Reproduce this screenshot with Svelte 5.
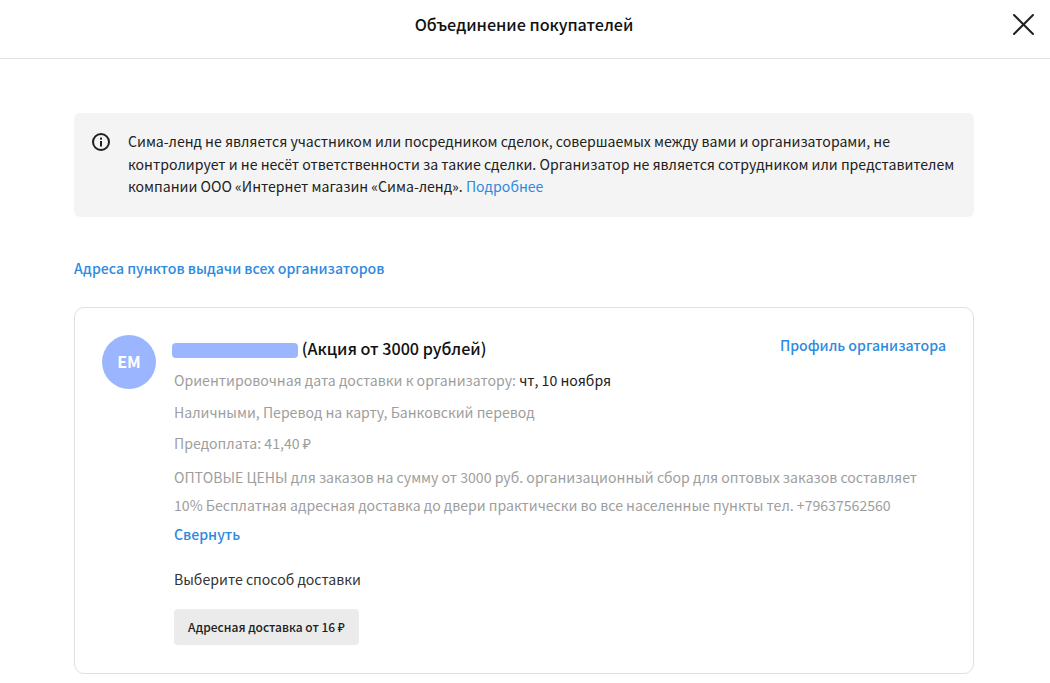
<script>
	const details = [
		'Наличными, Перевод на карту, Банковский перевод',
		'Предоплата: 41,40 ₽'
	];
</script>

<div class="page">
	<header class="header">
		<h1>Объединение покупателей</h1>
		<button class="close" aria-label="Закрыть">
			<svg width="24" height="24" viewBox="0 0 24 24" fill="none" stroke="#212121" stroke-width="2" stroke-linecap="round">
				<path d="M3 3l19 19M22 3L3 22" />
			</svg>
		</button>
	</header>

	<main class="content">
		<div class="notice">
			<svg class="info" width="20" height="20" viewBox="0 0 20 20" fill="none">
				<circle cx="10" cy="10" r="8" stroke="#212121" stroke-width="2" />
				<rect x="9" y="9" width="2" height="5.5" fill="#212121" />
				<rect x="9" y="5.6" width="2" height="2" fill="#212121" />
			</svg>
			<p>
				Сима-ленд не является участником или посредником сделок, совершаемых между вами и организаторами, не контролирует и не несёт ответственности за такие сделки. Организатор не является сотрудником или представителем компании ООО «Интернет магазин «Сима-ленд». <a href="#more">Подробнее</a>
			</p>
		</div>

		<a class="link all" href="#all">Адреса пунктов выдачи всех организаторов</a>

		<section class="card">
			<div class="avatar">ЕМ</div>
			<div class="body">
				<div class="top">
					<div class="title"><span class="blur"></span> (Акция от 3000 рублей)</div>
					<a class="link" href="#profile">Профиль организатора</a>
				</div>
				<div class="row first">Ориентировочная дата доставки к организатору: <span class="dark">чт, 10 ноября</span></div>
				{#each details as d}
					<div class="row">{d}</div>
				{/each}
				<div class="desc">ОПТОВЫЕ ЦЕНЫ для заказов на сумму от 3000 руб. организационный сбор для оптовых заказов составляет 10% Бесплатная адресная доставка до двери практически во все населенные пункты тел. +79637562560</div>
				<a class="link fold" href="#fold">Свернуть</a>
				<div class="choose">Выберите способ доставки</div>
				<button class="method">Адресная доставка от 16 ₽</button>
			</div>
		</section>
	</main>
</div>

<style>
	:global(body) {
		background: #fff;
		font-family: "Noto Sans CJK SC", "Noto Sans", sans-serif;
		color: #212121;
	}

	.page {
		height: 683px;
		overflow: hidden;
	}

	.header {
		position: relative;
		height: 58px;
		display: flex;
		align-items: center;
		justify-content: center;
		border-bottom: 1px solid #e0e0e0;
	}

	h1 {
		margin: 0 2px 10px 0;
		font-size: 16.15px;
		line-height: 24px;
		font-weight: 500;
		color: #111;
	}

	.close {
		position: absolute;
		top: 12px;
		right: 15px;
		width: 24px;
		height: 24px;
		padding: 0;
		border: none;
		background: none;
	}

	.content {
		width: 900px;
		margin-left: 74px;
		padding-top: 54px;
	}

	.notice {
		display: flex;
		gap: 17px;
		padding: 17px 18px 19px 17px;
		min-height: 68px;
		background: #f4f4f4;
		border-radius: 6px;
		font-size: 14.1px;
		line-height: 22.5px;
	}

	.info {
		flex: none;
		margin-top: 2px;
	}

	.notice p {
		margin: 0;
	}

	.notice a {
		color: #2e8ae0;
		text-decoration: none;
	}

	.link {
		color: #2e8ae0;
		font-size: 14.1px;
		line-height: 20px;
		font-weight: 500;
		text-decoration: none;
	}

	.all {
		display: block;
		margin: 41px 0 29px;
	}

	.card {
		display: flex;
		gap: 18px;
		height: 367px;
		box-sizing: border-box;
		padding: 27px 27px 0;
		border: 1px solid #e0e0e0;
		border-radius: 10px;
	}

	.avatar {
		flex: none;
		width: 54px;
		height: 54px;
		border-radius: 50%;
		background: #9bb6ff;
		color: #fff;
		font-size: 16px;
		font-weight: 700;
		line-height: 52px;
		text-align: center;
	}

	.body {
		flex: 1;
		min-width: 0;
		font-size: 14.1px;
		color: #9e9e9e;
	}

	.top {
		display: flex;
		justify-content: space-between;
		align-items: flex-start;
		height: 30px;
	}

	.title {
		color: #111;
		font-size: 16.15px;
		line-height: 26px;
		font-weight: 500;
	}

	.blur {
		display: inline-block;
		width: 126px;
		height: 15px;
		margin-left: -2px;
		vertical-align: -3px;
		background: #9bb6ff;
		border-radius: 4px;
	}

	.row {
		line-height: 20px;
		margin-bottom: 11.7px;
	}

	.row.first {
		margin-top: 5px;
	}

	.dark {
		color: #212121;
	}

	.desc {
		max-width: 750px;
		line-height: 28px;
		margin-top: -2px;
	}

	.fold {
		display: block;
		margin-top: 5px;
	}

	.choose {
		margin-top: 25px;
		line-height: 20px;
		color: #333;
	}

	.method {
		display: block;
		margin: 20px 0 0;
		height: 36px;
		padding: 0 14px;
		border: none;
		border-radius: 4px;
		background: #ebebeb;
		color: #212121;
		font: 500 12px/36px "Noto Sans CJK SC", "Noto Sans", sans-serif;
	}
</style>
